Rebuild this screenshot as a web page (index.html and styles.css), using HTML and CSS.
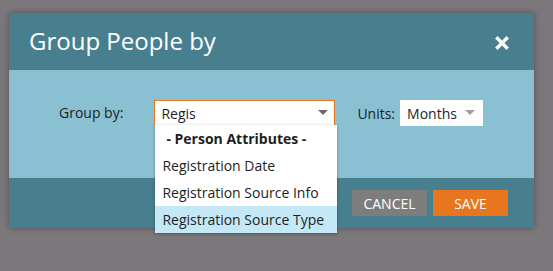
FILE: index.html
```html
<!DOCTYPE html>
<html lang="en">
<head>
    <meta charset="UTF-8">
    <title>Group People by</title>
    <link rel="stylesheet" href="styles.css">
</head>
<body>
    <div class="dialog">
        <div class="dialog-header">
            <h1>Group People by</h1>
            <svg class="close-icon" viewBox="0 0 14 14" fill="none" stroke="#ffffff" stroke-width="3.4" stroke-linecap="square">
                <path d="M2.5 2.5l9 9M11.5 2.5l-9 9"/>
            </svg>
        </div>

        <div class="dialog-body">
            <div class="field">
                <label class="field-label">Group by:</label>
                <div class="select group-select">
                    <span class="select-text">Regis</span>
                    <span class="caret"></span>
                    <ul class="dropdown">
                        <li class="dropdown-item group-title">- Person Attributes -</li>
                        <li class="dropdown-item">Registration Date</li>
                        <li class="dropdown-item">Registration Source Info</li>
                        <li class="dropdown-item active">Registration Source Type</li>
                    </ul>
                </div>
            </div>
            <div class="field units-field">
                <label class="field-label">Units:</label>
                <div class="select units-select">
                    <span class="select-text">Months</span>
                    <span class="caret"></span>
                </div>
            </div>
        </div>

        <div class="dialog-footer">
            <button class="button button-cancel">CANCEL</button>
            <button class="button button-save">SAVE</button>
        </div>
    </div>
</body>
</html>
```

FILE: styles.css
```css
:root {
    --page-background: #7b787b;
    --header-color: #477f8f;
    --body-color: #89c1d3;
    --accent-color: #e8761e;
    --cancel-color: #7d7d7d;
    --highlight-color: #c5e8f7;
    --text-color: #1e1e1e;
}

* {
    margin: 0;
    padding: 0;
    box-sizing: border-box;
}

body {
    font-family: "Open Sans", "Noto Sans", sans-serif;
    background-color: var(--page-background);
    color: var(--text-color);
    padding: 13px 0 0 9px;
    min-height: 100vh;
}

.dialog {
    width: 525px;
    box-shadow: 0 0 6px rgba(0, 0, 0, 0.35);
}

.dialog-header {
    height: 57px;
    background: var(--header-color);
    display: flex;
    align-items: center;
    justify-content: space-between;
    padding: 0 25px 0 20px;
}

.dialog-header h1 {
    font-size: 24px;
    font-weight: 400;
    color: #ffffff;
    margin-top: -3px;
}

.close-icon {
    width: 14px;
    height: 14px;
    margin-top: 3px;
}

.dialog-body {
    height: 108px;
    background: var(--body-color);
    display: flex;
    align-items: flex-start;
    padding: 30px 0 0 50px;
}

.field {
    display: flex;
    align-items: center;
}

.field-label {
    font-size: 14px;
    margin-right: 31px;
}

.units-field {
    margin-left: 22px;
}

.units-field .field-label {
    margin-right: 5px;
}

.select {
    position: relative;
    height: 25px;
    background: #ffffff;
    display: flex;
    align-items: center;
    justify-content: space-between;
    font-size: 14px;
}

.group-select {
    width: 181px;
    border: 1px solid var(--accent-color);
    border-bottom: none;
    padding: 0 6px 0 6px;
}

.units-select {
    width: 83px;
    height: 26px;
    padding: 0 8px 0 7px;
}

.caret {
    width: 0;
    height: 0;
    border-left: 5px solid transparent;
    border-right: 5px solid transparent;
    border-top: 5px solid #6a6a6a;
    margin-top: -1px;
}

.units-select .caret {
    border-top-color: #a0a0a0;
}

.dropdown {
    position: absolute;
    top: 24px;
    left: 0;
    width: 182px;
    list-style: none;
    background: #ffffff;
    box-shadow: 0 1px 3px rgba(0, 0, 0, 0.3);
    z-index: 2;
}

.dropdown-item {
    height: 27px;
    line-height: 27px;
    padding-left: 7px;
    white-space: nowrap;
}

.dropdown-item.group-title {
    font-weight: 700;
    padding-left: 11px;
}

.dropdown-item.active {
    background: var(--highlight-color);
}

.dialog-footer {
    height: 50px;
    background: var(--header-color);
    display: flex;
    justify-content: flex-end;
    align-items: flex-start;
    gap: 6px;
    padding: 12px 26px 0 0;
}

.button {
    width: 75px;
    height: 26px;
    border: none;
    color: #ffffff;
    font-family: inherit;
    font-size: 14px;
}

.button-cancel {
    background: var(--cancel-color);
}

.button-save {
    background: var(--accent-color);
}
```
